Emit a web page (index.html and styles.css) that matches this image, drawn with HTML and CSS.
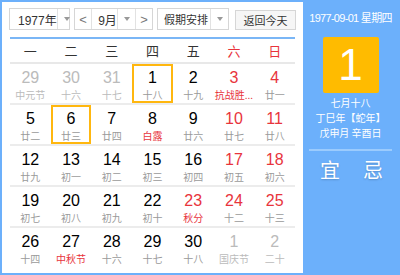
FILE: index.html
```html
<!DOCTYPE html>
<html lang="zh-CN">
<head>
    <meta charset="UTF-8">
    <title>万年历</title>
    <link rel="stylesheet" href="styles.css">
</head>
<body>

    <div class="calendar">
        <div class="main">
            <!-- Toolbar -->
            <div class="toolbar">
                <div class="select year">
                    <span class="label">1977年</span>
                    <span class="arrow"></span>
                </div>
                <div class="month">
                    <span class="nav">&lt;</span>
                    <div class="select inner">
                        <span class="label">9月</span>
                        <span class="arrow"></span>
                    </div>
                    <span class="nav">&gt;</span>
                </div>
                <div class="select holiday">
                    <span class="label">假期安排</span>
                    <span class="arrow"></span>
                </div>
                <button class="today-btn">返回今天</button>
            </div>

            <!-- Weekdays -->
            <div class="weekdays">
                <div>一</div>
                <div>二</div>
                <div>三</div>
                <div>四</div>
                <div>五</div>
                <div class="weekend">六</div>
                <div class="weekend">日</div>
            </div>

            <!-- Days -->
            <div class="days">
                <div class="day other"><span class="num">29</span><span class="lunar">中元节</span></div>
                <div class="day other"><span class="num">30</span><span class="lunar">十六</span></div>
                <div class="day other"><span class="num">31</span><span class="lunar">十七</span></div>
                <div class="day selected"><span class="num">1</span><span class="lunar">十八</span></div>
                <div class="day"><span class="num">2</span><span class="lunar">十九</span></div>
                <div class="day weekend"><span class="num">3</span><span class="lunar fest">抗战胜...</span></div>
                <div class="day weekend"><span class="num">4</span><span class="lunar">廿一</span></div>

                <div class="day"><span class="num">5</span><span class="lunar">廿二</span></div>
                <div class="day today"><span class="num">6</span><span class="lunar">廿三</span></div>
                <div class="day"><span class="num">7</span><span class="lunar">廿四</span></div>
                <div class="day"><span class="num">8</span><span class="lunar fest">白露</span></div>
                <div class="day"><span class="num">9</span><span class="lunar">廿六</span></div>
                <div class="day weekend"><span class="num">10</span><span class="lunar">廿七</span></div>
                <div class="day weekend"><span class="num">11</span><span class="lunar">廿八</span></div>

                <div class="day"><span class="num">12</span><span class="lunar">廿九</span></div>
                <div class="day"><span class="num">13</span><span class="lunar">初一</span></div>
                <div class="day"><span class="num">14</span><span class="lunar">初二</span></div>
                <div class="day"><span class="num">15</span><span class="lunar">初三</span></div>
                <div class="day"><span class="num">16</span><span class="lunar">初四</span></div>
                <div class="day weekend"><span class="num">17</span><span class="lunar">初五</span></div>
                <div class="day weekend"><span class="num">18</span><span class="lunar">初六</span></div>

                <div class="day"><span class="num">19</span><span class="lunar">初七</span></div>
                <div class="day"><span class="num">20</span><span class="lunar">初八</span></div>
                <div class="day"><span class="num">21</span><span class="lunar">初九</span></div>
                <div class="day"><span class="num">22</span><span class="lunar">初十</span></div>
                <div class="day weekend"><span class="num">23</span><span class="lunar fest">秋分</span></div>
                <div class="day weekend"><span class="num">24</span><span class="lunar">十二</span></div>
                <div class="day weekend"><span class="num">25</span><span class="lunar">十三</span></div>

                <div class="day last"><span class="num">26</span><span class="lunar">十四</span></div>
                <div class="day last"><span class="num">27</span><span class="lunar fest">中秋节</span></div>
                <div class="day last"><span class="num">28</span><span class="lunar">十六</span></div>
                <div class="day last"><span class="num">29</span><span class="lunar">十七</span></div>
                <div class="day last"><span class="num">30</span><span class="lunar">十八</span></div>
                <div class="day last other"><span class="num">1</span><span class="lunar">国庆节</span></div>
                <div class="day last other"><span class="num">2</span><span class="lunar">二十</span></div>
            </div>
        </div>

        <!-- Side panel -->
        <div class="side">
            <div class="side-date">1977-09-01 星期四</div>
            <div class="big-day">1</div>
            <div class="side-lunar">
                <div>七月十八</div>
                <div>丁巳年【蛇年】</div>
                <div>戊申月 辛酉日</div>
            </div>
            <div class="yiji">
                <span>宜</span>
                <span>忌</span>
            </div>
        </div>
    </div>

</body>
</html>
```

FILE: styles.css
```css
* {
    margin: 0;
    padding: 0;
    box-sizing: border-box;
}

body {
    font-family: "Liberation Sans", "Noto Sans CJK SC", Arial, sans-serif;
    background: #fff;
}

.calendar {
    display: flex;
    width: 400px;
    height: 275px;
    border: 2px solid #6cb0fb;
}

.main {
    width: 301px;
    background: #fff;
    padding: 6px 8px 0 8px;
}

/* Toolbar */
.toolbar {
    display: flex;
    align-items: center;
    height: 22px;
    margin-left: -1px;
    font-size: 11px;
    color: #333;
    white-space: nowrap;
}

.toolbar > * {
    flex-shrink: 0;
}

.select {
    display: flex;
    height: 22px;
    border: 1px solid #d6d6d6;
    background: #fff;
}

.select .label {
    display: flex;
    align-items: center;
    padding-left: 8px;
    flex: 1;
}

.select .arrow {
    width: 18px;
    border-left: 1px solid #e2e2e2;
    position: relative;
}

.select .arrow::after {
    content: "";
    position: absolute;
    left: 6px;
    top: 8px;
    border-left: 3px solid transparent;
    border-right: 3px solid transparent;
    border-top: 4px solid #999;
}

.year {
    width: 61px;
}

.year .label {
    font-size: 12px;
}

.month {
    display: flex;
    height: 22px;
    width: 79px;
    margin-left: 4px;
    border: 1px solid #d6d6d6;
}

.month .nav {
    width: 17px;
    display: flex;
    align-items: center;
    justify-content: center;
    color: #777;
    font-size: 13px;
}

.month .inner {
    flex: 1;
    height: 20px;
    border-top: none;
    border-bottom: none;
    border-color: #e2e2e2;
}

.month .inner .label {
    padding-left: 6px;
    font-size: 12px;
}

.holiday {
    width: 72px;
    margin-left: 4px;
}

.holiday .label {
    padding-left: 6px;
}

.today-btn {
    margin-left: 6px;
    width: 61px;
    height: 20px;
    margin-top: 2px;
    border: 1px solid #d6d6d6;
    background: #f6f6f6;
    color: #333;
    font-size: 11px;
    font-family: "Noto Sans CJK SC", sans-serif;
}

/* Weekdays */
.weekdays {
    display: grid;
    grid-template-columns: repeat(7, 1fr);
    margin-top: 7px;
    border-top: 2px solid #7ab6f6;
    border-bottom: 2px solid #e8e8e8;
    height: 27px;
    align-items: center;
    text-align: center;
    font-size: 13px;
    color: #333;
    font-family: "Noto Sans CJK SC", sans-serif;
}

.weekdays .weekend {
    color: #e8343c;
}

/* Days */
.days {
    display: grid;
    grid-template-columns: repeat(7, 1fr);
}

.day {
    display: flex;
    flex-direction: column;
    align-items: center;
    height: 41px;
    padding-top: 4px;
    border-bottom: 2px solid #ececec;
    position: relative;
    white-space: nowrap;
}

.day.last {
    border-bottom: none;
}

.day .num {
    font-size: 16px;
    line-height: 19px;
    color: #000;
}

.day .lunar {
    font-size: 10px;
    line-height: 15px;
    color: #9a9a9a;
    font-family: "Noto Sans CJK SC", sans-serif;
}

.day.weekend .num {
    color: #e8343c;
}

.day .lunar.fest {
    color: #e8343c;
}

.day.other .num {
    color: #bbb;
}

.day.other .lunar {
    color: #bbb;
}

.day.selected::after,
.day.today::after {
    content: "";
    position: absolute;
    left: 0;
    right: 0;
    top: 0;
    bottom: 0;
    border: 2px solid #ffb70f;
}

/* Side panel */
.side {
    flex: 1;
    background: #6cb0fb;
    color: #fff;
    text-align: center;
    padding-top: 9px;
    white-space: nowrap;
}

.side-date {
    font-size: 11px;
    line-height: 14px;
    letter-spacing: -0.7px;
}

.big-day {
    width: 56px;
    height: 56px;
    margin: 12px auto 0;
    background: #ffbb00;
    border-radius: 2px;
    font-size: 44px;
    line-height: 56px;
}

.side-lunar {
    margin-top: 2px;
    font-size: 10px;
    line-height: 15px;
    font-family: "Noto Sans CJK SC", sans-serif;
}

.yiji {
    display: flex;
    justify-content: space-between;
    margin: 9px 6px 0 6px;
    padding: 7px 9px 0 11px;
    border-top: 2px solid #9bcbfd;
    font-size: 20px;
    line-height: 24px;
    font-family: "Noto Sans CJK SC", sans-serif;
    text-shadow: 0 1px 2px rgba(0, 0, 0, 0.2);
}
```
